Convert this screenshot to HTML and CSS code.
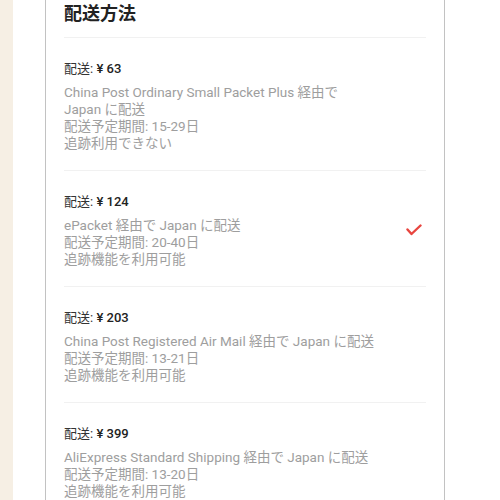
FILE: index.html
```html
<!DOCTYPE html>
<html lang="ja">
<head>
<meta charset="utf-8">
<link rel="stylesheet" href="styles.css">
</head>
<body>
<div class="page">
  <div class="side"></div>
  <div class="main">
    <section class="panel">
      <h1 class="title">配送方法</h1>
      <ul class="list">
        <li class="item">
          <div class="info">
            <div class="price"><span class="lbl">配送:</span> ¥ 63</div>
            <div class="desc">China Post Ordinary Small Packet Plus 経由で Japan に配送</div>
            <div class="desc">配送予定期間: 15-29日</div>
            <div class="desc">追跡利用できない</div>
          </div>
        </li>
        <li class="item">
          <div class="info">
            <div class="price"><span class="lbl">配送:</span> ¥ 124</div>
            <div class="desc">ePacket 経由で Japan に配送</div>
            <div class="desc">配送予定期間: 20-40日</div>
            <div class="desc">追跡機能を利用可能</div>
          </div>
          <svg class="check" width="16" height="12" viewBox="0 0 16 12"><path d="M1.5 5.5 L5.5 10 L14.5 1.5" fill="none" stroke="#e8453f" stroke-width="2.4" stroke-linecap="round" stroke-linejoin="round"/></svg>
        </li>
        <li class="item">
          <div class="info">
            <div class="price"><span class="lbl">配送:</span> ¥ 203</div>
            <div class="desc">China Post Registered Air Mail 経由で Japan に配送</div>
            <div class="desc">配送予定期間: 13-21日</div>
            <div class="desc">追跡機能を利用可能</div>
          </div>
        </li>
        <li class="item">
          <div class="info">
            <div class="price"><span class="lbl">配送:</span> ¥ 399</div>
            <div class="desc">AliExpress Standard Shipping 経由で Japan に配送</div>
            <div class="desc">配送予定期間: 13-20日</div>
            <div class="desc">追跡機能を利用可能</div>
          </div>
        </li>
      </ul>
    </section>
  </div>
</div>
</body>
</html>
```

FILE: styles.css
```css
html, body {
  margin: 0;
  padding: 0;
  background: #ffffff;
  font-family: Roboto, "Noto Sans CJK JP", sans-serif;
}
.page {
  display: flex;
  width: 500px;
  height: 500px;
  overflow: hidden;
}
.side {
  width: 13px;
  flex: none;
  background: #f6efe4;
}
.main {
  flex: 1;
  padding-left: 32px;
  background: #ffffff;
}
.panel {
  width: 362px;
  padding: 0 18px;
  border-left: 1px solid #c2c2c2;
  border-right: 1px solid #c2c2c2;
  height: 500px;
}
.title {
  margin: 0 0 13px 0;
  font-family: "Noto Sans CJK JP", sans-serif;
  font-size: 18px;
  line-height: 24px;
  font-weight: 700;
  color: #222222;
}
.list {
  list-style: none;
  margin: 0;
  padding: 0;
}
.item {
  display: flex;
  align-items: center;
  border-top: 1px solid #f1f1f1;
  padding: 21px 0 18px 0;
}
.info {
  width: 314px;
}
.check {
  margin-left: auto;
  margin-right: 4px;
}
.price {
  font-size: 13px;
  line-height: 20px;
  font-weight: 500;
  color: #222222;
  margin-bottom: 5px;
}
.lbl {
  font-weight: 400;
  color: #333333;
}
.desc {
  font-size: 13.5px;
  line-height: 17px;
  color: #9e9e9e;
}
```
